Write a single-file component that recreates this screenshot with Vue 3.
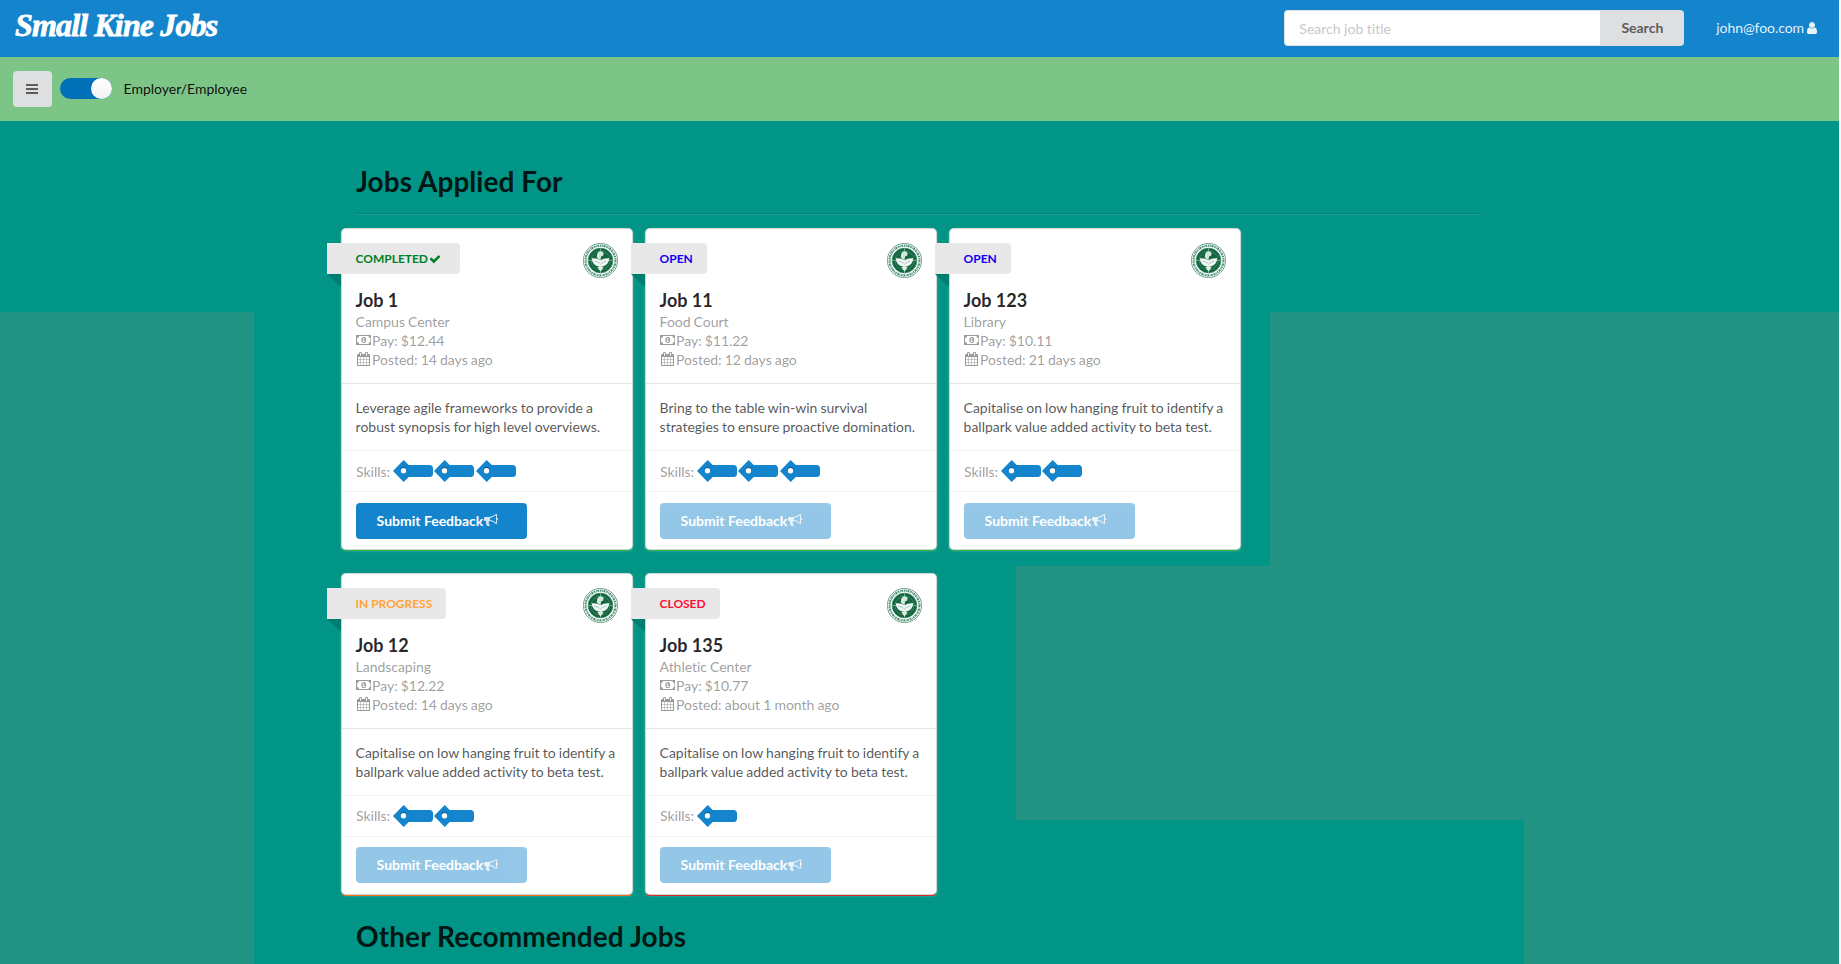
<script setup>
const jobs = [
  { title: 'Job 1', place: 'Campus Center', pay: '$12.44', posted: '14 days ago', text: 'Leverage agile frameworks to provide a robust synopsis for high level overviews.', skills: 3, status: 'COMPLETED', tone: 'completed', accent: 'green', active: true },
  { title: 'Job 11', place: 'Food Court', pay: '$11.22', posted: '12 days ago', text: 'Bring to the table win-win survival strategies to ensure proactive domination.', skills: 3, status: 'OPEN', tone: 'open', accent: 'green' },
  { title: 'Job 123', place: 'Library', pay: '$10.11', posted: '21 days ago', text: 'Capitalise on low hanging fruit to identify a ballpark value added activity to beta test.', skills: 2, status: 'OPEN', tone: 'open', accent: 'green' },
  { title: 'Job 12', place: 'Landscaping', pay: '$12.22', posted: '14 days ago', text: 'Capitalise on low hanging fruit to identify a ballpark value added activity to beta test.', skills: 2, status: 'IN PROGRESS', tone: 'progress', accent: 'orange' },
  { title: 'Job 135', place: 'Athletic Center', pay: '$10.77', posted: 'about 1 month ago', text: 'Capitalise on low hanging fruit to identify a ballpark value added activity to beta test.', skills: 1, status: 'CLOSED', tone: 'closed', accent: 'red' },
]
</script>

<template>
  <div class="page">
    <header class="topbar">
      <a class="brand">Small Kine Jobs</a>
      <div class="search">
        <input type="text" placeholder="Search job title" />
        <button>Search</button>
      </div>
      <a class="user">john@foo.com
        <svg viewBox="256 128 1280 1536" width="10" height="12"><path d="M1536 1399q0 109-62.5 187t-150.5 78h-854q-88 0-150.5-78t-62.5-187q0-85 8.5-160.5t31.5-152 58.5-131 94-89 134.5-34.5q131 128 313 128t313-128q76 0 134.5 34.5t94 89 58.5 131 31.5 152 8.5 160.5zm-256-887q0 159-112.5 271.5t-271.5 112.5-271.5-112.5-112.5-271.5 112.5-271.5 271.5-112.5 271.5 112.5 112.5 271.5z" /></svg>
      </a>
    </header>

    <nav class="subbar">
      <button class="burger">
        <svg viewBox="0 0 12 10" width="12" height="10"><path d="M0 0h12v2H0zM0 4h12v2H0zM0 8h12v2H0z" /></svg>
      </button>
      <span class="toggle"><i></i></span>
      <label>Employer/Employee</label>
    </nav>

    <main class="main">
      <h1>Jobs Applied For</h1>
      <hr />
      <div class="cards">
        <article v-for="job in jobs" :key="job.title" class="card" :class="job.accent">
          <section class="info">
            <div class="head">
              <div class="ribbon" :class="job.tone">
                {{ job.status }}<svg v-if="job.active" viewBox="0 0 1792 1792" width="12" height="12"><path d="M1671 566q0 40-28 68l-724 724-136 136q-28 28-68 28t-68-28l-136-136-362-362q-28-28-28-68t28-68l136-136q28-28 68-28t68 28l294 295 656-657q28-28 68-28t68 28l136 136q28 28 28 68z" /></svg>
              </div>
              <svg class="seal" viewBox="0 0 35 35" width="35" height="35">
                <circle cx="17.5" cy="17.5" r="17.1" fill="#fff" stroke="#4d8f75" stroke-width=".8" />
                <circle cx="17.5" cy="17.5" r="14.9" fill="none" stroke="#4d8f75" stroke-width="2.2" stroke-dasharray="1.5 .7 .8 .6 1.9 .8" />
                <circle cx="17.5" cy="17.5" r="12.4" fill="#14663f" stroke="#3c8465" stroke-width=".6" />
                <path d="M3 17.5h29M17.5 5v25" stroke="#a9cdbd" stroke-width=".6" />
                <circle cx="17.5" cy="17.5" r="9.500" fill="none" stroke="#5b9a7f" stroke-width=".5" />
                <path d="M8.800 15.300c3.200-.4 6.400.4 8.700 2.300 2.300-1.900 5.500-2.700 8.700-2.300-.5 5.800-4 8.300-8.700 8.300s-8.200-2.500-8.700-8.300z" fill="#f1f7f4" />
                <path d="M13.800 14.600l.3-3.700 1.700-2.300 2.900-.4 2 1.900-.5 2.500-2.200 1-.5 3.200-1.600-.2z" fill="#d3e5dc" />
                <path d="M14.500 24.500l1.800-1.200h2.400l1.800 1.200-3 4z" fill="#e3efe9" />
                <path d="M11.500 18.200c2.400.2 4.500 1.200 6 3 1.500-1.800 3.600-2.800 6-3" fill="none" stroke="#77ae96" stroke-width=".6" />
              </svg>
            </div>
            <h2>{{ job.title }}</h2>
            <div class="meta">{{ job.place }}</div>
            <div class="meta">
              <span class="ic"><svg viewBox="0 0 15.500 10" width="15.500" height="10"><path fill-rule="evenodd" d="M0 0h15.500v10H0zM3 1.100A2 2 0 0 1 1.100 3v4A2 2 0 0 1 3 8.900h9.500A2 2 0 0 1 14.400 7V3a2 2 0 0 1-1.900-1.900z" /><path fill-rule="evenodd" d="M7.750 1.900a2.400 3.100 0 1 0 0 6.200a2.400 3.100 0 1 0 0-6.200zM7 3.300h1.200v2.800h.7v.8H6.600v-.8h.6V4.400h-.6v-.6z" /></svg></span>Pay: {{ job.pay }}
            </div>
            <div class="meta">
              <span class="ic cal"><svg viewBox="64 0 1664 1792" width="13" height="14"><path d="M192 1664h288v-288h-288v288zm352 0h320v-288h-320v288zm-352-352h288v-320h-288v320zm352 0h320v-320h-320v320zm-352-384h288v-288h-288v288zm736 736h320v-288h-320v288zm-384-736h320v-288h-320v288zm768 736h288v-288h-288v288zm-384-352h320v-320h-320v320zm-352-864v-288q0-13-9.5-22.5t-22.5-9.5h-64q-13 0-22.5 9.5t-9.5 22.5v288q0 13 9.5 22.5t22.5 9.5h64q13 0 22.5-9.5t9.5-22.5zm736 864h288v-320h-288v320zm-384-384h320v-288h-320v288zm384 0h288v-288h-288v288zm32-480v-288q0-13-9.5-22.5t-22.5-9.5h-64q-13 0-22.5 9.5t-9.5 22.5v288q0 13 9.5 22.5t22.5 9.5h64q13 0 22.5-9.5t9.5-22.5zm384-64v1280q0 52-38 90t-90 38h-1408q-52 0-90-38t-38-90v-1280q0-52 38-90t90-38h128v-96q0-66 47-113t113-47h64q66 0 113 47t47 113v96h384v-96q0-66 47-113t113-47h64q66 0 113 47t47 113v96h128q52 0 90 38t38 90z" /></svg></span>Posted: {{ job.posted }}
            </div>
          </section>
          <section class="desc">{{ job.text }}</section>
          <section class="skills">
            <span>Skills:</span>
            <svg v-for="n in job.skills" :key="n" class="tag" viewBox="0 0 40 22" width="40" height="22">
              <path d="M0 11L10.700 0l5 5H36.500a3.500 3.500 0 0 1 3.500 3.500v5a3.500 3.500 0 0 1-3.500 3.500H15.700l-5 5z" fill="#1484cc" />
              <circle cx="10.500" cy="9.900" r="2.900" fill="#0d588a" />
              <circle cx="10.500" cy="10.700" r="2.700" fill="#fff" />
            </svg>
          </section>
          <section class="foot">
            <button class="submit" :class="{ disabled: !job.active }">Submit Feedback<svg viewBox="0 128 1792 1536" width="14" height="12"><path d="M1664 640q53 0 90.500 37.500t37.500 90.500-37.500 90.500-90.500 37.500v384q0 52-38 90t-90 38q-417-347-812-380-58 19-91 66t-31 100.500 40 92.500q-20 33-23 65.500t6 58 33.500 55 48 50 61.500 50.500q-29 58-111.500 83t-168.500 11.500-132-55.500q-7-23-29.500-87.500t-32-94.500-23-89-15-101 3.500-98.500 22-110.500h-122q-66 0-113-47t-47-113v-192q0-66 47-113t113-47h480q435 0 896-384 52 0 90 38t38 90v384zm-128 604v-954q-394 302-768 343v270q377 42 768 341z" /></svg></button>
          </section>
        </article>
      </div>
      <h1 class="second">Other Recommended Jobs</h1>
    </main>
  </div>
</template>

<style>
html, body { margin: 0; background: #fff; overflow: hidden; }
</style>

<style scoped>
.page {
  width: 1839px;
  height: 964px;
  overflow: hidden;
  font: 14px/19px Lato, "Liberation Sans", sans-serif;
  font-variant-ligatures: none;
  color: rgba(0, 0, 0, .87);
  --tile: linear-gradient(#239484, #239484);
  background:
    var(--tile) 0 312px / 254px 652px no-repeat,
    var(--tile) 1270px 312px / 569px 254px no-repeat,
    var(--tile) 1016px 566px / 823px 254px no-repeat,
    var(--tile) 1524px 820px / 315px 144px no-repeat,
    #009586;
}
button, input { font: inherit; border: 0; margin: 0; }
svg { fill: currentColor; flex: none; }

.topbar { height: 57px; box-sizing: border-box; padding: 0 22px 0 15px; background: #1484cc; display: flex; align-items: center; }
.brand { font: italic 700 32px/40px "Liberation Serif", serif; letter-spacing: -.85px; color: #fff; -webkit-text-stroke: .8px #fff; margin: -8px auto 0 0; white-space: nowrap; }
.search { display: flex; width: 400px; height: 36px; margin: -1px 32px 0 0; }
.search input { flex: 1; min-width: 0; box-sizing: border-box; padding: 0 14px; border: 1px solid #dcdddf; border-right: 0; border-radius: 4px 0 0 4px; background: #fff; }
.search input::placeholder { color: #c8c8c8; opacity: 1; }
.search button { width: 84px; padding: 0 0 1px; border-radius: 0 4px 4px 0; background: #dedfe1; color: #5c5c5d; font-weight: 700; }
.user { display: flex; align-items: center; gap: 3px; margin-top: -2px; letter-spacing: -.07px; color: rgba(255, 255, 255, .9); white-space: nowrap; }

.subbar { height: 64px; padding-left: 13px; display: flex; align-items: center; background: #7dc487; }
.burger { width: 39px; height: 36px; padding: 0 1px 0 0; display: flex; align-items: center; justify-content: center; border-radius: 4px; background: #dedfe1; color: #5c5c5d; }
.toggle { width: 52px; height: 21px; margin: -1px 11.500px 0 8px; border-radius: 11px; background: #0071b9; display: flex; justify-content: flex-end; }
.toggle i { width: 21px; height: 21px; border-radius: 50%; background: linear-gradient(#fff, #f1f1f1); }
.subbar label { margin-top: -2px; color: rgba(0, 0, 0, .92); }

.main { width: 1127px; margin: 0 auto; padding-top: 42px; }
h1 { margin: 0; font-size: 28px; line-height: 36px; font-weight: 700; letter-spacing: .05px; }
hr { height: 0; margin: 14px 0; border: 0; border-top: 1px solid rgba(34, 36, 38, .15); border-bottom: 1px solid rgba(255, 255, 255, .1); }
.cards { display: flex; flex-wrap: wrap; gap: 24.500px 14px; width: 1113px; margin-left: -14px; }
.card { width: 290px; height: 320.300px; border-radius: 4px; background: #fff; }
.green { box-shadow: 0 0 0 1px #d4d4d5, 0 2px 0 0 #21ba45, 0 1px 3px 0 #d4d4d5; }
.orange { box-shadow: 0 0 0 1px #d4d4d5, 0 2px 0 0 #f2711c, 0 1px 3px 0 #d4d4d5; }
.red { box-shadow: 0 0 0 1px #d4d4d5, 0 2px 0 0 #db2828, 0 1px 3px 0 #d4d4d5; }

.info { height: 126px; padding: 14px; }
.head { display: flex; align-items: flex-start; justify-content: space-between; height: 35px; }
.ribbon { position: relative; height: 31px; margin-left: -29px; padding: 0 14px 0 28.600px; display: flex; align-items: center; border-radius: 0 4px 4px 0; background: #e8e8e8; font-size: 12px; font-weight: 700; letter-spacing: -.03px; white-space: nowrap; }
.ribbon::after { content: ""; position: absolute; left: 0; top: 100%; border-style: solid; border-width: 0 14px 13px 0; border-color: transparent #007d71 transparent transparent; }
.ribbon svg { margin: 0 5.500px 0 .8px; }
.completed { color: #008022; }
.open { color: #0f00f5; }
.progress { color: #ffa43a; }
.closed { color: #ff0f37; }
h2 { margin: 11px 0 0 -.4px; font-size: 18px; line-height: 23px; font-weight: 700; color: rgba(0, 0, 0, .85); letter-spacing: -.03px; }
.meta { margin-left: -.4px; color: rgba(0, 0, 0, .4); display: flex; white-space: nowrap; word-spacing: -.4px; letter-spacing: -.04px; }
.ic { width: 16.500px; display: flex; align-items: center; padding-bottom: 1px; box-sizing: border-box; }
.cal svg { margin-left: 1px; }

.desc { height: 38px; padding: 14px 10px 14px 13.600px; border-top: 1px solid #e6e6e6; color: rgba(0, 0, 0, .68); word-spacing: -.4px; letter-spacing: -.015px; }
.skills { height: 40px; padding: 0 14px; border-top: 1px solid #f1f1f1; display: flex; align-items: center; color: rgba(0, 0, 0, .4); }
.skills span { width: 37px; padding-top: 1px; margin-top: -1px; }
.tag { margin-right: 1.400px; }
.foot { padding: 10.600px 14px 0; border-top: 1px solid #f1f1f1; }
.submit { width: 171px; height: 36px; padding: 0 0 1px 20.600px; display: flex; align-items: center; border-radius: 4px; background: #1484cc; color: #fff; font-weight: 700; white-space: nowrap; }
.submit svg { margin-left: 1px; opacity: .8; }
.disabled { opacity: .45; }
.second { margin-top: 24px; letter-spacing: .1px; }
</style>
